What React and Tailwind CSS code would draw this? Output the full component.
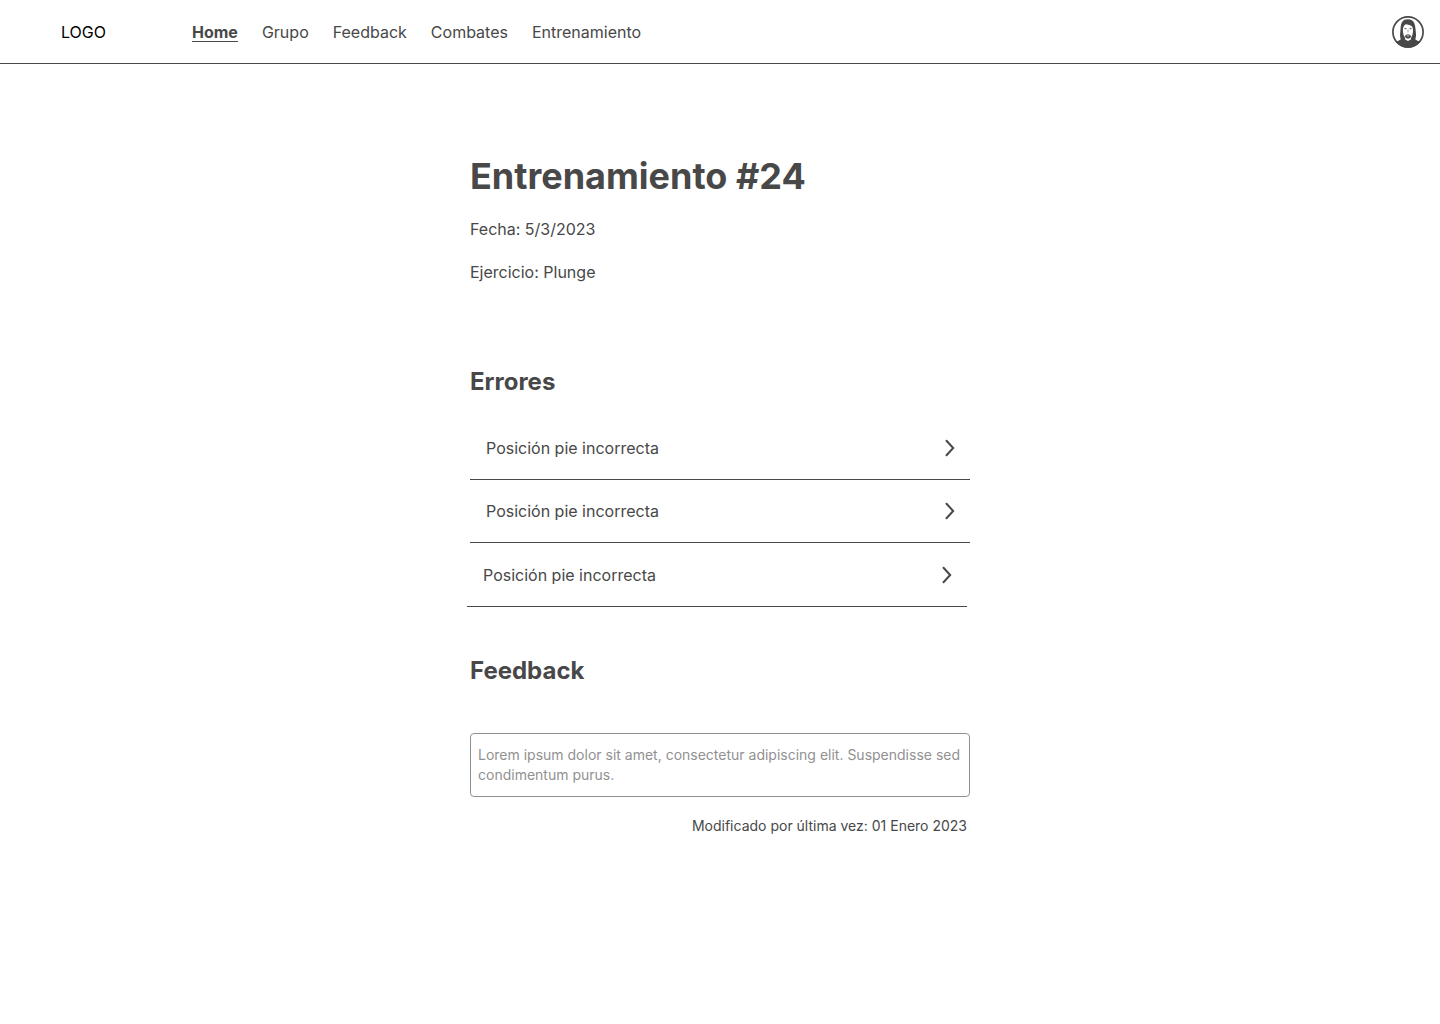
import React from "react";

const links = ["Home", "Grupo", "Feedback", "Combates", "Entrenamiento"];
const errors = [
  { text: "Posición pie incorrecta", row: "h-16" },
  { text: "Posición pie incorrecta", row: "h-[63px]" },
  { text: "Posición pie incorrecta", row: "h-16 -ml-[3px] mr-[3px]" },
];

function Avatar() {
  return (
    <svg viewBox="0 0 32 32" className="block size-8" aria-hidden="true">
      <circle cx="16" cy="16" r="15.1" fill="#fff" stroke="#484848" strokeWidth="1.7" />
      {/* hair and shoulders */}
      <path d="M4 26.200C5.500 24.800 7.600 24.300 8.800 23.200C7.400 20.500 8.300 17 8.600 12C8.900 6.500 11 3.200 15.500 3.200C20.500 2.600 23 6.500 23.400 12C23.700 16 24.800 20.500 23.200 23.200C24.400 24.300 26.500 24.800 28 26.200C25 29.800 20.700 31.600 16 31.600S7 29.800 4 26.200Z" fill="#484848" />
      {/* face and neck */}
      <path d="M11 12.500C11.500 10.200 12.500 8.800 14 8.200C17 9.200 19.800 9 20.600 11.500C21.400 14 21 17.500 20 20L18.900 22V23.600L16 25L13.100 23.600V22L12 20C11 17.500 10.800 15 11 12.500Z" fill="#fff" />
      {/* eyes, nose, mouth and beard */}
      <path d="M12.500 12.700H14.500M17.500 12.700H19.500" stroke="#484848" strokeWidth="1" />
      <path d="M16 13.500V16.500" stroke="#484848" strokeWidth="0.5" />
      <path d="M12.800 20.200C13.500 19.500 14.400 18.300 16 18.300S18.500 19.500 19.200 20.200C18.600 21.500 17.500 22.600 16 22.600S13.400 21.500 12.800 20.200Z" fill="#484848" />
      <path d="M14.700 19.900H17.300" stroke="#fff" strokeWidth="0.7" />
    </svg>
  );
}

export default function App() {
  return (
    <div className="min-h-screen bg-white font-['Inter',sans-serif] text-base text-[#484848]">
      <header className="flex h-16 items-center border-b border-[#484848] pr-4">
        <div className="w-48 shrink-0 pl-[61px] text-black">LOGO</div>
        <nav className="flex flex-1 gap-6">
          {links.map((l, i) => (
            <a key={l} href="#" className={i === 0 ? "font-bold underline underline-offset-[3px]" : ""}>{l}</a>
          ))}
        </nav>
        <button aria-label="Perfil"><Avatar /></button>
      </header>
      <main className="mx-auto max-w-[500px] pt-[88px]">
        <h1 className="text-4xl leading-12 font-bold">Entrenamiento #24</h1>
        <p className="mt-[17px]">Fecha: 5/3/2023</p>
        <p className="mt-[19px]">Ejercicio: Plunge</p>
        <h2 className="mt-[82px] text-2xl font-bold">Errores</h2>
        <ul className="mt-[18px]">
          {errors.map((e, i) => (
            <li key={i} className={e.row}>
              <button className="flex h-full w-full items-center justify-between border-b border-[#484848] px-4 text-left">
                {e.text}
                <svg viewBox="0 0 8 16" className="h-4 w-2 overflow-visible" fill="none" stroke="#484848" strokeWidth="2" strokeLinecap="round" aria-hidden="true"><path d="M0.500 0.800L7.200 8L0.500 15.200" /></svg>
              </button>
            </li>
          ))}
        </ul>
        <h2 className="mt-12 text-2xl font-bold">Feedback</h2>
        <textarea
          aria-label="Feedback"
          rows={2}
          className="mt-[46px] block h-16 w-full resize-none rounded border border-[#919191] px-[7px] py-[11px] text-sm text-[#919191]"
          defaultValue="Lorem ipsum dolor sit amet, consectetur adipiscing elit. Suspendisse sed condimentum purus."
        />
        <p className="mt-[19px] pr-[3px] text-right text-sm">Modificado por última vez: 01 Enero 2023</p>
      </main>
    </div>
  );
}
